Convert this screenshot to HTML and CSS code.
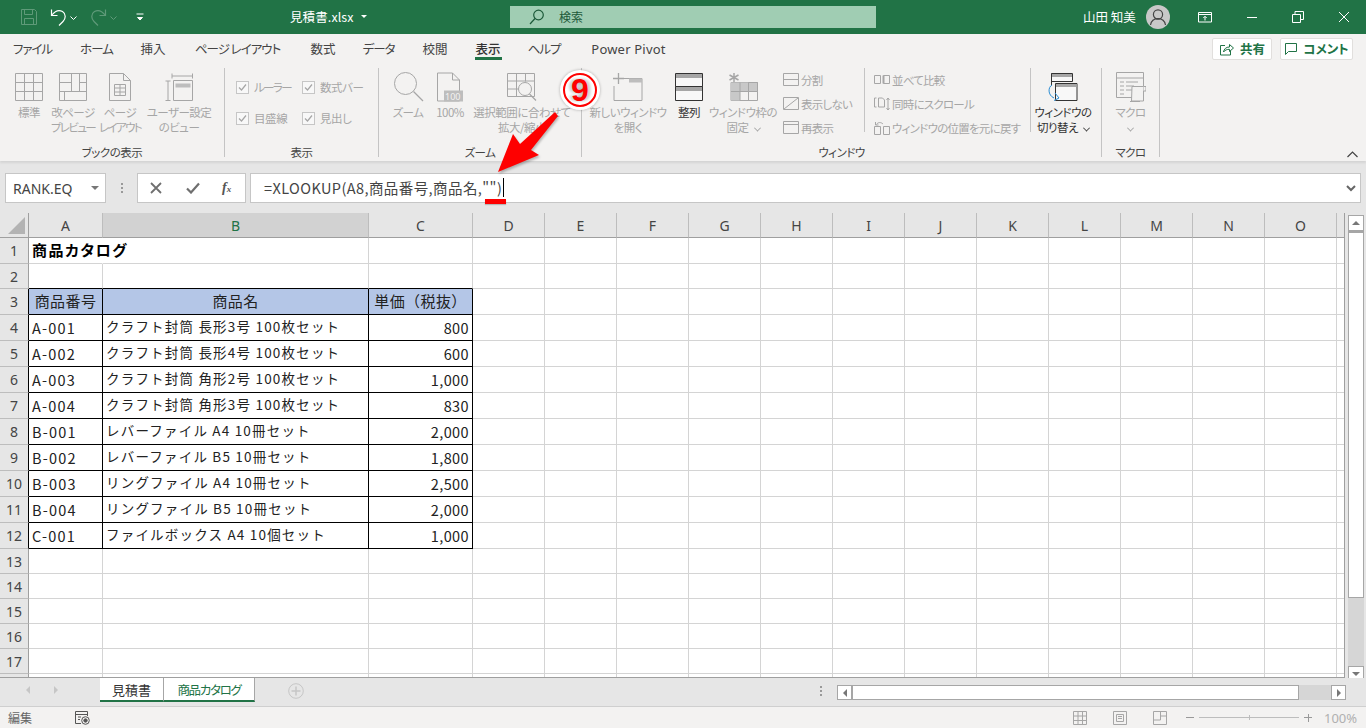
FILE: index.html
```html
<!DOCTYPE html>
<html lang="ja">
<head>
<meta charset="utf-8">
<title>見積書.xlsx - Excel</title>
<link rel="stylesheet" href="styles.css">
</head>
<body>
<div class="app">
  <header class="titlebar">
    <div class="qat">
      <svg class="qi s-save" width="18" height="18" viewBox="0 0 18 18" fill="none" stroke="#5f9a79"><path d="M1.5 1.5h13l2 2v13h-15z"/><path d="M4.5 1.5v5h8v-5M4.5 16.5v-6h9v6"/></svg>
      <svg class="qi s-undo" width="18" height="18" viewBox="0 0 18 18" fill="none" stroke="#fff" stroke-width="1.2"><path d="M1.5 1.5v6h6"/><path d="M1.8 7C5 3 9 1.5 12.5 3.5c3.5 2.2 3.5 7 .5 10l-4 4"/></svg>
      <svg class="qi s-car" width="7" height="4" viewBox="0 0 7 4" fill="none" stroke="#fff"><path d="M.5.5l3 3 3-3"/></svg>
      <svg class="qi s-redo" width="18" height="18" viewBox="0 0 18 18" fill="none" stroke="#5f9a79" stroke-width="1.2"><path d="M16.5 1.5v6h-6"/><path d="M16.2 7C13 3 9 1.5 5.5 3.5c-3.5 2.2-3.500 7-.5 10l4 4"/></svg>
      <svg class="qi s-car2" width="7" height="4" viewBox="0 0 7 4" fill="none" stroke="#5f9a79"><path d="M.5.5l3 3 3-3"/></svg>
      <svg class="qi s-cust" width="8" height="8" viewBox="0 0 8 8" fill="none" stroke="#fff"><path d="M.5 1h7"/><path d="M1.500 4.500h5L4 7z" fill="#fff"/></svg>
    </div>
    <div class="docname">見積書.xlsx<span class="docarrow"></span></div>
    <div class="search">
      <svg width="16" height="16" viewBox="0 0 16 16" fill="none" stroke="#1d5a3a" stroke-width="1.2"><circle cx="9.5" cy="6" r="4.8"/><path d="M6 9.5L1 15"/></svg>
      <span>検索</span>
    </div>
    <div class="user">山田 知美</div>
    <div class="avatar"><svg width="24" height="24" viewBox="0 0 24 24" fill="none" stroke="#444" stroke-width="1.2"><circle cx="12" cy="9.5" r="4.6"/><path d="M4.5 20c.8-4.5 3.8-6.3 7.5-6.3s6.700 1.800 7.500 6.300"/></svg></div>
    <div class="winbtns">
      <svg width="14" height="12" viewBox="0 0 14 12" fill="none" stroke="#fff"><path d="M.5 1.500h13v9.500H.5zM.5 3.500h13"/><path d="M7 9.500V5.500M5.300 7L7 5.300 8.700 7"/></svg>
      <svg width="12" height="12" viewBox="0 0 12 12" fill="none" stroke="#fff"><path d="M1 6.500h10"/></svg>
      <svg width="12" height="12" viewBox="0 0 12 12" fill="none" stroke="#fff"><path d="M.5 3.500h8v8h-8zM3 3.500v-3h8.500v8h-3"/></svg>
      <svg width="12" height="12" viewBox="0 0 12 12" fill="none" stroke="#fff"><path d="M1 1l10 10M11 1L1 11"/></svg>
    </div>
  </header>

  <nav class="tabs">
    <span class="tab kana">ファイル</span><span class="tab kana">ホーム</span><span class="tab">挿入</span><span class="tab kana">ページ レイアウト</span><span class="tab">数式</span><span class="tab kana">データ</span><span class="tab">校閲</span><span class="tab on"><b>表示</b></span><span class="tab kana">ヘルプ</span><span class="tab">Power Pivot</span>
    <div class="tabactions">
      <button class="act share"><svg width="16" height="14" viewBox="0 0 16 14" fill="none" stroke="#217346"><path d="M6 3.500H1.500v9.500h10V9"/><path d="M4.500 10c.5-3 2.500-5 6-5V2.500l4 3.500-4 3.500V7.300C8 7.300 6 8 4.500 10z"/></svg><b>共有</b></button>
      <button class="act comment"><svg width="14" height="14" viewBox="0 0 14 14" fill="none" stroke="#217346"><path d="M1.500 1.500h11v8h-8l-3 3z"/></svg><b>コメント</b></button>
    </div>
  </nav>

  <section class="ribbon">
    <div class="group g1">
      <div class="grow">
        <div class="rbtn dis w44">
          <svg class="ic" width="28" height="28" viewBox="0 0 28 28" fill="#f3f2f1" stroke="#a6a6a6"><path d="M.5.500h27v27H.5zM9.500.5v27M18.500.5v27M.5 9.500h27M.5 18.500h27"/></svg>
          <span>標準</span>
        </div>
        <div class="rbtn dis w44">
          <svg class="ic" width="28" height="28" viewBox="0 0 28 28" fill="#f3f2f1" stroke="#a6a6a6"><path d="M.5.500h27v27H.5zM.5 18.500h27M.5 9.500h12M12.500.5v18M5.500 18.500v9M20.500.5v18M20.500 9.500h7"/></svg>
          <span>改ページ<br><em class="kn">プレビュー</em></span>
        </div>
        <div class="rbtn dis w50">
          <svg class="ic" width="22" height="28" viewBox="0 0 22 28" fill="#f3f2f1" stroke="#a6a6a6"><path d="M.5.500h14l7 7v20H.5zM14.500.5v7h7"/><path d="M5.500 11.500h11v11h-11zM5.500 15h11M5.500 19h11M11 11.500v11"/></svg>
          <span>ページ<br><em class="kn">レイアウト</em></span>
        </div>
        <div class="rbtn dis w68">
          <svg class="ic" width="28" height="28" viewBox="0 0 28 28" fill="#f3f2f1" stroke="#a6a6a6"><path d="M7 .5v5M27.500.5v5M7 3h20.500M.5 8h5M.5 27.500h5M3 8v19.500"/><path d="M8.500 7.500h19v20h-19z"/><path d="M10.500 10.500h15v4h-15z" fill="#bdbdbd" stroke="none"/></svg>
          <span>ユーザー設定<br>のビュー</span>
        </div>
      </div>
      <div class="glabel">ブックの表示</div>
    </div>

    <div class="group g2">
      <div class="checks">
        <label class="chk"><i class="box"><svg width="9" height="9" viewBox="0 0 9 9" fill="none" stroke="#a6a6a6" stroke-width="1.200"><path d="M1 4.500l2.500 2.500L8 1.500"/></svg></i><em class="kn">ルーラー</em></label>
        <label class="chk"><i class="box"><svg width="9" height="9" viewBox="0 0 9 9" fill="none" stroke="#a6a6a6" stroke-width="1.200"><path d="M1 4.500l2.500 2.500L8 1.500"/></svg></i>数式バー</label>
        <label class="chk"><i class="box"><svg width="9" height="9" viewBox="0 0 9 9" fill="none" stroke="#a6a6a6" stroke-width="1.200"><path d="M1 4.500l2.500 2.500L8 1.500"/></svg></i>目盛線</label>
        <label class="chk"><i class="box"><svg width="9" height="9" viewBox="0 0 9 9" fill="none" stroke="#a6a6a6" stroke-width="1.200"><path d="M1 4.500l2.500 2.500L8 1.500"/></svg></i>見出し</label>
      </div>
      <div class="glabel">表示</div>
    </div>

    <div class="group g3">
      <div class="grow">
        <div class="rbtn dis w44">
          <svg class="ic" width="31" height="30" viewBox="0 0 31 30" fill="none" stroke="#a6a6a6"><circle cx="12.500" cy="11.500" r="11"/><path d="M20.500 19.500l9.500 9.500" stroke-width="1.300"/></svg>
          <span>ズーム</span>
        </div>
        <div class="rbtn dis w40">
          <svg class="ic" width="26" height="29" viewBox="0 0 26 29" fill="#f3f2f1" stroke="#a6a6a6"><path d="M.5.500h15l7 7v21H.5zM15.500.5v7h7"/><rect x="7" y="18" width="19" height="11" fill="#bdbdbd" stroke="none"/><text x="8" y="27" class="hundred">100</text></svg>
          <span>100%</span>
        </div>
        <div class="rbtn dis w104">
          <svg class="ic ic3" width="30" height="28" viewBox="0 0 30 28" fill="none" stroke="#a6a6a6"><path d="M.5.500h27v23H.5zM.5 8h27M.5 16h12M9.500.5v23M18.500.5v8"/><circle cx="18" cy="16" r="6.500" fill="#f3f2f1"/><path d="M22.500 21l6.500 6.500" stroke-width="1.300"/></svg>
          <span>選択範囲に合わせて<br>拡大/縮小</span>
        </div>
      </div>
      <div class="glabel">ズーム</div>
    </div>

    <div class="group g4">
      <div class="grow">
        <div class="rbtn dis w80">
          <svg class="ic" width="30" height="28" viewBox="0 0 30 28" fill="none" stroke="#a6a6a6"><path d="M1 27.500h28v-22H10M1 27.500V13"/><path d="M16 5.500h13v4H16z" fill="#bdbdbd" stroke="none"/><path d="M5.500 0v11M0 5.500h11" stroke-width="1.300"/></svg>
          <span>新しいウィンドウ<br>を開く</span>
        </div>
        <div class="rbtn w42">
          <svg class="ic" width="28" height="28" viewBox="0 0 28 28" fill="#f8f8f8" stroke="#333"><path d="M.5.500h27v13H.5zM.5 13.500h27v14H.5z"/><path d="M1 1h26v4H1zM1 14h26v4H1z" fill="#a6a6a6" stroke="none"/></svg>
          <span>整列</span>
        </div>
        <div class="rbtn dis w66">
          <svg class="ic" width="30" height="28" viewBox="0 0 30 28" fill="#f3f2f1" stroke="#a6a6a6"><path d="M3 9.500h26.500v18H3z"/><path d="M3 9.500h17v9H12v9H3z" fill="#c8c8c8" stroke="none"/><path d="M20.500 9.500v18M12 9.500v18M3 18.500h26.500"/><path d="M20.500 9.500h9v9h-9z" fill="#c8c8c8"/><path d="M6 0v9M1.500 2L10.500 7M10.500 2L1.500 7" stroke-width="1.500"/></svg>
          <span>ウィンドウ枠の<br>固定<em class="chev"></em></span>
        </div>
        <div class="stack st1">
          <div class="sm dis"><svg width="16" height="13" viewBox="0 0 16 13" fill="none" stroke="#a6a6a6"><path d="M.5.500h15v12H.5zM.5 6.500h15"/></svg>分割</div>
          <div class="sm dis"><svg width="16" height="13" viewBox="0 0 16 13" fill="none" stroke="#a6a6a6"><path d="M.5.500h15v12H.5zM1 12L15 1"/></svg>表示しない</div>
          <div class="sm dis"><svg width="16" height="13" viewBox="0 0 16 13" fill="none" stroke="#a6a6a6"><path d="M.5.500h15v12H.5zM.5 3.500h15"/></svg>再表示</div>
        </div>
        <div class="stack st2">
          <div class="sm dis"><svg width="16" height="10" viewBox="0 0 16 10" fill="none" stroke="#a6a6a6"><path d="M.5.500h6v8h-6zM9.500.5h6v8h-6z"/><path d="M9.500.5v8" stroke-width="2"/></svg>並べて比較</div>
          <div class="sm dis"><svg width="16" height="14" viewBox="0 0 16 14" fill="none" stroke="#a6a6a6"><path d="M2.500 1H.5v9h2M4.500 1h4l2 2v7h-6zM14 1v12M12.500 3L14 1l1.500 2M12.500 11l1.500 2 1.500-2"/></svg>同時にスクロール</div>
          <div class="sm dis"><svg width="16" height="14" viewBox="0 0 16 14" fill="none" stroke="#a6a6a6"><path d="M.5 5.500h6v8h-6zM9.500 5.500h6v8h-6z"/><path d="M2.500 3.500C4 1 7 1 9 3M1.500 1v3h3"/></svg>ウィンドウの位置を元に戻す</div>
        </div>
        <div class="rbtn w68 sw">
          <svg class="ic" width="30" height="28" viewBox="0 0 30 28" fill="#f8f8f8" stroke="#333"><path d="M3.500.5h21v8H3.500z"/><path d="M4 1h20v3H4z" fill="#a6a6a6" stroke="none"/><path d="M3.500 .5v12M7.500 10.500h21.500v17H7.500z"/><path d="M8 11h20.500v3H8z" fill="#a6a6a6" stroke="none"/><path d="M4 12c-4 2-4.500 10 2 13M7 20l4 5-5 2.500" fill="none" stroke="#2a8dd4"/></svg>
          <span>ウィンドウの<br>切り替え<em class="chev dark"></em></span>
        </div>
      </div>
      <div class="glabel lab4">ウィンドウ</div>
    </div>

    <div class="group g5">
      <div class="grow">
        <div class="rbtn dis w57">
          <svg class="ic" width="30" height="30" viewBox="0 0 30 30" fill="#f3f2f1" stroke="#a6a6a6"><path d="M.5.500h27v25H.5zM.5 6h27" /><path d="M4 10h4M10 10h12M4 14h4M10 14h8M4 18h4M10 18h6M4 22h4"/><path d="M16 14.500h11.500V29h-12z" fill="#f3f2f1"/><path d="M27.500 14.500h2.500V19h-2.500M14 29.500h10"/></svg>
          <span>マクロ<br><em class="chev solo"></em></span>
        </div>
      </div>
      <div class="glabel">マクロ</div>
    </div>
    <svg class="collapse" width="11" height="7" viewBox="0 0 11 7" fill="none" stroke="#444" stroke-width="1.200"><path d="M.5 6l5-5 5 5"/></svg>
  </section>

  <section class="fbar">
    <div class="namebox">RANK.EQ<i class="tri"></i></div>
    <div class="fdots"></div>
    <div class="fbtns">
      <svg width="12" height="12" viewBox="0 0 12 12" fill="none" stroke="#6f6f6f" stroke-width="1.800"><path d="M1 1l10 10M11 1L1 11"/></svg>
      <svg width="14" height="12" viewBox="0 0 14 12" fill="none" stroke="#6f6f6f" stroke-width="2.200"><path d="M1 6.500l4 4L13 1.500"/></svg>
      <span class="fx"><i>f</i><small>x</small></span>
    </div>
    <div class="finput"><span class="ftext">=XLOOKUP(A8,商品番号,商品名,"")</span><i class="caret"></i>
      <svg class="fexpand" width="10" height="7" viewBox="0 0 10 7" fill="none" stroke="#666" stroke-width="2"><path d="M1 1l4 4 4-4"/></svg>
    </div>
  </section>

  <section class="sheetwrap">
    <div class="sheet">
      <div class="row h25 head"><div class="rh corner"><svg width="17" height="17" viewBox="0 0 17 17"><path d="M17 0v17H0z" fill="#b3b3b3"/></svg></div><div class="ch a">A</div><div class="ch b sel">B</div><div class="ch c">C</div><div class="ch n">D</div><div class="ch n">E</div><div class="ch n">F</div><div class="ch n">G</div><div class="ch n">H</div><div class="ch n">I</div><div class="ch n">J</div><div class="ch n">K</div><div class="ch n">L</div><div class="ch n">M</div><div class="ch n">N</div><div class="ch n">O</div><div class="ch p"></div></div>
      <div class="row h26"><div class="rh">1</div><div class="ce a over"><b>商品カタログ</b></div><div class="ce b"></div><div class="ce c"></div><div class="rest"></div></div>
      <div class="row h25 tb"><div class="rh">2</div><div class="ce a"></div><div class="ce b"></div><div class="ce c"></div><div class="rest"></div></div>
      <div class="row h26 tbl hdr"><div class="rh">3</div><div class="ce a mid">商品番号</div><div class="ce b mid">商品名</div><div class="ce c mid">単価（税抜）</div><div class="rest"></div></div>
      <div class="row h26 tbl"><div class="rh">4</div><div class="ce a code">A-001</div><div class="ce b nm">クラフト封筒 長形3号 100枚セット</div><div class="ce c num">800</div><div class="rest"></div></div>
      <div class="row h26 tbl"><div class="rh">5</div><div class="ce a code">A-002</div><div class="ce b nm">クラフト封筒 長形4号 100枚セット</div><div class="ce c num">600</div><div class="rest"></div></div>
      <div class="row h26 tbl"><div class="rh">6</div><div class="ce a code">A-003</div><div class="ce b nm">クラフト封筒 角形2号 100枚セット</div><div class="ce c num">1,000</div><div class="rest"></div></div>
      <div class="row h26 tbl"><div class="rh">7</div><div class="ce a code">A-004</div><div class="ce b nm">クラフト封筒 角形3号 100枚セット</div><div class="ce c num">830</div><div class="rest"></div></div>
      <div class="row h26 tbl"><div class="rh">8</div><div class="ce a code">B-001</div><div class="ce b nm">レバーファイル A4 10冊セット</div><div class="ce c num">2,000</div><div class="rest"></div></div>
      <div class="row h26 tbl"><div class="rh">9</div><div class="ce a code">B-002</div><div class="ce b nm">レバーファイル B5 10冊セット</div><div class="ce c num">1,800</div><div class="rest"></div></div>
      <div class="row h26 tbl"><div class="rh">10</div><div class="ce a code">B-003</div><div class="ce b nm">リングファイル A4 10冊セット</div><div class="ce c num">2,500</div><div class="rest"></div></div>
      <div class="row h26 tbl"><div class="rh">11</div><div class="ce a code">B-004</div><div class="ce b nm">リングファイル B5 10冊セット</div><div class="ce c num">2,000</div><div class="rest"></div></div>
      <div class="row h26 tbl"><div class="rh">12</div><div class="ce a code">C-001</div><div class="ce b nm">ファイルボックス A4 10個セット</div><div class="ce c num">1,000</div><div class="rest"></div></div>
      <div class="row h25"><div class="rh">13</div><div class="ce a"></div><div class="ce b"></div><div class="ce c"></div><div class="rest"></div></div>
      <div class="row h25"><div class="rh">14</div><div class="ce a"></div><div class="ce b"></div><div class="ce c"></div><div class="rest"></div></div>
      <div class="row h25"><div class="rh">15</div><div class="ce a"></div><div class="ce b"></div><div class="ce c"></div><div class="rest"></div></div>
      <div class="row h25"><div class="rh">16</div><div class="ce a"></div><div class="ce b"></div><div class="ce c"></div><div class="rest"></div></div>
      <div class="row h25"><div class="rh">17</div><div class="ce a"></div><div class="ce b"></div><div class="ce c"></div><div class="rest"></div></div>
      <div class="row h5"><div class="rh"></div><div class="ce a"></div><div class="ce b"></div><div class="ce c"></div><div class="rest"></div></div>
    </div>
    <div class="vscroll">
      <div class="sbtn"><i class="up"></i></div>
      <div class="vthumb"></div>
      <div class="vtrack"></div>
      <div class="sbtn"><i class="down"></i></div>
    </div>
  </section>

  <section class="tabbar">
    <div class="sheetnav">
      <i class="nl"></i><i class="nr"></i>
    </div>
    <div class="stab">見積書</div>
    <div class="stab active">商品カタログ</div>
    <div class="addsheet"><svg width="16" height="16" viewBox="0 0 16 16" fill="none" stroke="#c6c6c6"><circle cx="8" cy="8" r="7.300"/><path d="M8 3.500v9M3.500 8h9" stroke-width="1.500"/></svg></div>
    <div class="hdots"></div>
    <div class="hscroll">
      <div class="sbtn h"><i class="left"></i></div>
      <div class="hthumb"></div>
      <div class="htrack"></div>
      <div class="sbtn h"><i class="right"></i></div>
    </div>
  </section>

  <footer class="status">
    <span class="mode">編集</span>
    <svg class="macro" width="15" height="14" viewBox="0 0 15 14" fill="none" stroke="#555"><path d="M6 12.500H.5v-12h12V5M.5 3.500h12M3 6h3M3 8.500h2"/><circle cx="10.500" cy="9.500" r="3.800"/><circle cx="10.500" cy="9.500" r="1.700" fill="#555"/></svg>
    <div class="views">
      <svg width="14" height="14" viewBox="0 0 14 14" fill="none" stroke="#a6a6a6"><path d="M.5.500h13v13H.5zM5 .5v13M9.500.5v13M.5 5h13M.5 9.500h13"/></svg>
      <svg width="14" height="14" viewBox="0 0 14 14" fill="none" stroke="#a6a6a6"><path d="M.5.500h13v13H.5zM3.500 3.500h7v7h-7zM5 5.500h4M5 7.500h4"/></svg>
      <svg width="14" height="14" viewBox="0 0 14 14" fill="none" stroke="#a6a6a6"><path d="M.5.500h13v13H.5zM.5 9h7V.5M7.500 5H13"/></svg>
    </div>
    <div class="zoomer">
      <i class="zm"></i>
      <div class="slider"><i class="knob"></i></div>
      <i class="zp"></i>
    </div>
    <span class="pct">100%</span>
  </footer>

  <svg class="arrow" width="90" height="80" viewBox="0 0 90 80"><path d="M8 71L23 33 30 43 65 11 68 15 41 49 49 54z" fill="#fe0000"/></svg>
  <div class="badge"><span>9</span></div>
  <div class="underline"></div>
</div>
</body>
</html>
```

FILE: styles.css
```css
* { box-sizing: border-box; }
html, body { margin: 0; padding: 0; }
body { font-family: "Noto Sans CJK JP", "Noto Sans", sans-serif; font-feature-settings: "palt"; color: #444; }
.app { position: relative; width: 1366px; height: 728px; overflow: hidden; display: flex; flex-direction: column; background: #f3f2f1; }
svg { display: block; }
i, em { font-style: normal; }

/* title bar */
.titlebar { height: 34px; background: #217346; display: flex; align-items: center; color: #fff; font-size: 12.500px; flex: none; }
.qat { width: 290px; display: flex; align-items: center; flex: none; }
.s-save { margin-left: 20px; }
.s-undo { margin-left: 12px; }
.s-car { margin-left: 2px; margin-top: 2px; }
.s-redo { margin-left: 12px; }
.s-car2 { margin-left: 3px; margin-top: 2px; }
.s-cust { margin-left: 19px; }
.docname { width: 220px; flex: none; display: flex; align-items: center; letter-spacing: .1px; margin-top: -2px; }
.docarrow { width: 0; height: 0; border: 3px solid transparent; border-top: 3.500px solid #fff; border-bottom: 0; margin-left: 7px; }
.search { width: 366px; height: 22px; flex: none; background: #a0cdb3; display: flex; align-items: center; padding-left: 19px; color: #1d5a3a; font-size: 12px; }
.search span { margin-left: 14px; margin-top: -2px; }
.user { margin-left: 207px; width: 52px; flex: none; white-space: nowrap; font-size: 12.500px; margin-top: -2px; }
.avatar { margin-left: 11px; width: 24px; height: 24px; border-radius: 50%; background: #c8c8c8; flex: none; }
.winbtns { display: flex; align-items: center; margin-left: 28px; gap: 34px; }

/* tabs */
.tabs { height: 30px; display: flex; align-items: center; font-size: 12.500px; position: relative; flex: none; padding-bottom: 1px; }
.tab { text-align: center; height: 100%; display: flex; align-items: center; justify-content: center; white-space: nowrap; color: #444; }
.tab.kana { letter-spacing: -1px; }
.tab:nth-child(1) { width: 65px; }
.tab:nth-child(2) { width: 63px; }
.tab:nth-child(3) { width: 50px; }
.tab:nth-child(4) { width: 119px; }
.tab:nth-child(5) { width: 52px; }
.tab:nth-child(6) { width: 59px; }
.tab:nth-child(7) { width: 54px; }
.tab:nth-child(8) { width: 52px; }
.tab:nth-child(9) { width: 60px; }
.tab:nth-child(10) { width: 109px; font-family: "Noto Sans", sans-serif; font-size: 13px; letter-spacing: .2px; }
.tab.on { position: relative; }
.tab.on b { font-weight: 500; color: #333; }
.tab.on::after { content: ""; position: absolute; left: 13px; right: 12px; bottom: 3px; height: 3px; background: #217346; }
.tabactions { margin-left: auto; display: flex; gap: 8px; padding-right: 13px; }
.act { height: 22px; border: 1px solid #e1dfdd; background: #fff; border-radius: 2px; display: flex; align-items: center; justify-content: center; gap: 5px; color: #217346; font: inherit; font-size: 12.500px; padding: 0; }
.act b { font-weight: 700; }
.share { width: 60px; }
.comment { width: 73px; }

/* ribbon */
.ribbon { height: 97px; display: flex; padding-top: 4px; position: relative; flex: none; box-shadow: 0 2px 2px rgba(0,0,0,.08); z-index: 2; font-size: 11.500px; }
.group { height: 89px; display: flex; flex-direction: column; border-right: 1px solid #c4c4c4; flex: none; }
.g1 { width: 225px; padding-left: 7px; }
.g2 { width: 154px; }
.g3 { width: 203px; padding-left: 7px; }
.g4 { width: 520px; padding-left: 6px; }
.g5 { width: 58px; }
.grow { display: flex; flex: 1; min-height: 0; }
.glabel { height: 15px; line-height: 15px; margin-bottom: -3px; text-align: center; color: #444; font-size: 11.500px; letter-spacing: -.5px; white-space: nowrap; }
.g1 .glabel, .g3 .glabel { margin-left: -7px; }
.lab4 { margin-left: -6px; margin-right: 0; }
.rbtn { display: flex; flex-direction: column; align-items: center; padding-top: 4px; flex: none; color: #333; letter-spacing: -.5px; }
.rbtn span { display: block; margin-top: 3px; line-height: 14.500px; text-align: center; white-space: nowrap; }
.rbtn .ic { height: 30px; }
.rbtn.dis { color: #a6a6a6; }
.rbtn.sw { margin-left: -2px; }
.kn { letter-spacing: -1.600px; }
.hundred { font-family: "Noto Sans", sans-serif; font-size: 9px; fill: #f3f2f1; stroke: none; letter-spacing: 0; }
.w40 { width: 40px; } .w42 { width: 42px; } .w44 { width: 44px; } .w50 { width: 50px; } .w57 { width: 57px; } .w66 { width: 66px; } .w68 { width: 68px; } .w80 { width: 80px; } .w104 { width: 104px; }
.chev { display: inline-block; width: 5px; height: 5px; border-right: 1px solid #a6a6a6; border-bottom: 1px solid #a6a6a6; transform: rotate(45deg) translate(-1px,-1px); margin-left: 6px; }
.chev.dark { border-color: #444; }
.chev.solo { margin-left: 0; }
.checks { display: grid; grid-template-columns: 66px 66px; grid-template-rows: 31px 31px; padding: 11px 0 0 11px; flex: 1; align-content: start; }
.chk { display: flex; align-items: center; color: #a6a6a6; white-space: nowrap; height: 16px; letter-spacing: -.4px; }
.box { width: 13px; height: 13px; border: 1px solid #c6c6c6; background: #f8f8f8; margin-right: 5px; display: flex; align-items: center; justify-content: center; flex: none; }
.stack { display: flex; flex-direction: column; flex: none; }
.st1 { margin-left: 7px; width: 82px; border-right: 1px solid #c4c4c4; height: 64px; gap: 9px; padding-top: 4px; }
.st2 { padding-left: 9px; width: 166px; border-right: 1px solid #c4c4c4; height: 64px; gap: 9px; padding-top: 4px; }
.sm { display: flex; align-items: center; gap: 2px; height: 15px; color: #a6a6a6; white-space: nowrap; letter-spacing: -.75px; }
.collapse { position: absolute; right: 8px; bottom: 3px; }

/* formula bar */
.fbar { height: 52px; background: #e6e6e6; display: flex; padding: 12px 5px 10px 5px; flex: none; }
.namebox { width: 101px; background: #fff; border: 1px solid #c6c6c6; display: flex; align-items: center; padding-left: 7px; font-family: "Noto Sans", sans-serif; font-size: 14px; color: #444; position: relative; }
.tri { position: absolute; right: 6px; top: 12px; border: 4px solid transparent; border-top: 4px solid #777; border-bottom: 0; }
.fdots { width: 2px; height: 10px; margin: 10px 14px 0 15px; background: repeating-linear-gradient(#999 0 2px, transparent 2px 4px); flex: none; }
.fbtns { width: 109px; background: #fff; border: 1px solid #c6c6c6; display: flex; align-items: center; padding-left: 12px; gap: 24px; flex: none; }
.fx { font-family: "Liberation Serif", serif; color: #555; font-size: 14px; font-weight: 700; margin-left: -2px; }
.fx i { font-style: italic; }
.fx small { font-size: 9px; font-style: italic; }
.finput { flex: 1; margin-left: 4px; background: #fff; border: 1px solid #c6c6c6; display: flex; align-items: center; padding-left: 13px; padding-bottom: 2px; color: #444; position: relative; }
.ftext { font-size: 14.500px; font-feature-settings: normal; white-space: nowrap; letter-spacing: .42px; }
.caret { width: 1px; height: 19px; background: #000; margin-left: 1px; }
.fexpand { position: absolute; right: 4px; top: 11px; }

/* sheet */
.sheetwrap { height: 465px; background: #e6e6e6; display: flex; flex: none; }
.sheet { width: 1345px; height: 465px; background: #fff; border-right: 1px solid #9f9f9f; border-bottom: 1px solid #9f9f9f; overflow: hidden; flex: none; }
.row { display: flex; }
.h25 { height: 25px; } .h26 { height: 26px; } .h5 { height: 5px; }
.rh { width: 29px; flex: none; background: #e6e6e6; border-right: 1px solid #9f9f9f; border-bottom: 1px solid #bdbdbd; display: flex; align-items: center; justify-content: center; font-family: "Noto Sans", sans-serif; font-size: 14px; color: #444; }
.corner { align-items: flex-end; justify-content: flex-end; padding: 0 3px 3px 0; border-bottom: 1px solid #9f9f9f; }
.ch { flex: none; height: 25px; background: #e6e6e6; border-right: 1px solid #bdbdbd; border-bottom: 1px solid #9f9f9f; display: flex; align-items: center; justify-content: center; font-family: "Noto Sans", sans-serif; font-size: 14px; color: #444; }
.ch.sel { background: #d2d2d2; color: #217346; }
.a { width: 74px; flex: none; } .b { width: 266px; flex: none; } .c { width: 104px; flex: none; }
.ch.n { width: 72px; }
.ch.p { flex: 1; border-right: 0; }
.ce { border-right: 1px solid #d4d4d4; border-bottom: 1px solid #d4d4d4; display: flex; align-items: center; padding: 0 3px; font-size: 14.500px; color: #222; white-space: nowrap; }
.rest { flex: 1; border-bottom: 1px solid #d4d4d4; background: repeating-linear-gradient(90deg, transparent 0 71px, #d4d4d4 71px 72px); }
.over { overflow: visible; border-right-color: transparent; padding-bottom: 3px; }
.over b { color: #000; font-size: 15px; font-weight: 700; letter-spacing: 1.500px; }
.tb .ce { border-bottom-color: #000; }
.tbl .ce { border-right-color: #000; border-bottom-color: #000; }
.tbl .rh { border-right-color: #000; }
.hdr .ce { background: #b4c6e7; }
.ce.mid { justify-content: center; font-feature-settings: normal; font-size: 15px; letter-spacing: .4px; padding: 0 0 3px; }
.code { letter-spacing: 1.200px; }
.ce.nm { font-size: 13.500px; font-feature-settings: normal; letter-spacing: 1.200px; padding-bottom: 3px; }
.num { justify-content: flex-end; letter-spacing: .4px; }
.vscroll { width: 21px; padding-left: 3px; padding-right: 2px; display: flex; flex-direction: column; flex: none; margin-top: 2px; height: 467px; }
.sbtn { width: 16px; height: 16px; background: #fff; border: 1px solid #a6a6a6; display: flex; align-items: center; justify-content: center; flex: none; }
.vthumb { height: 367px; background: #fff; border: 1px solid #a6a6a6; border-top-width: 2px; flex: none; }
.vtrack { flex: 1; background: #d6d6d6; }
.up { border: 4px solid transparent; border-bottom: 4px solid #777; border-top: 0; }
.down { border: 4px solid transparent; border-top: 4px solid #777; border-bottom: 0; }
.left { border: 4px solid transparent; border-right: 4px solid #777; border-left: 0; }
.right { border: 4px solid transparent; border-left: 4px solid #777; border-right: 0; }

/* tab bar */
.tabbar { height: 28px; background: #e6e6e6; display: flex; align-items: flex-start; flex: none; }
.sheetnav { width: 100px; height: 24px; flex: none; display: flex; align-items: center; padding-left: 26px; gap: 24px; }
.nl { border: 4px solid transparent; border-right: 4px solid #c6c6c6; border-left: 0; }
.nr { border: 4px solid transparent; border-left: 4px solid #c6c6c6; border-right: 0; }
.stab { height: 24px; background: #fff; border-bottom: 2px solid #217346; border-right: 1px solid #a6a6a6; display: flex; align-items: center; justify-content: center; font-size: 13px; color: #333; flex: none; width: 64px; }
.stab.active { width: 91px; color: #217346; font-size: 12.500px; letter-spacing: -1.300px; }
.addsheet { margin: 5px 0 0 33px; flex: none; }
.hdots { width: 2px; height: 10px; margin: 8px 0 0 516px; background: repeating-linear-gradient(#999 0 2px, transparent 2px 4px); flex: none; }
.hscroll { display: flex; margin: 7px 0 0 15px; width: 509px; flex: none; height: 15px; }
.sbtn.h { width: 15px; height: 15px; }
.hthumb { flex: none; width: 447px; background: #fff; border: 1px solid #a6a6a6; }
.htrack { flex: 1; background: #d6d6d6; }

/* status bar */
.status { flex: 1; background: #f3f2f1; border-top: 1px solid #cfcfcf; display: flex; align-items: center; font-size: 12px; color: #666; }
.mode { margin-left: 8px; width: 67px; flex: none; }
.views { display: flex; gap: 26px; margin-left: 983px; flex: none; }
.zoomer { display: flex; align-items: center; margin-left: 19px; width: 126px; flex: none; }
.zm, .zp { width: 8px; height: 1px; background: #999; position: relative; flex: none; }
.zp::after { content: ""; position: absolute; left: 3.500px; top: -3.500px; width: 1px; height: 8px; background: #999; }
.slider { width: 100px; height: 1px; background: #bdbdbd; margin: 0 5px; position: relative; flex: none; }
.knob { position: absolute; left: 50px; top: -2px; width: 1px; height: 5px; background: #bdbdbd; }
.pct { margin-left: 12px; color: #b0b0b0; font-family: "Noto Sans", sans-serif; font-size: 13px; }

/* annotation */
.arrow { position: absolute; left: 490px; top: 101px; filter: drop-shadow(1px 2px 1px rgba(0,0,0,.25)); z-index: 5; }
.badge { position: absolute; left: 560px; top: 70px; width: 40px; height: 40px; border-radius: 50%; background: #fff; box-shadow: 0 0 3px rgba(0,0,0,.3); display: flex; align-items: center; justify-content: center; z-index: 6; }
.badge::before { content: ""; position: absolute; inset: 3px; border-radius: 50%; border: 2px solid #fe0000; }
.badge span { font-family: "Liberation Sans", sans-serif; font-weight: 700; font-size: 32px; color: #fe0000; line-height: 1; text-shadow: 3px 0 3px rgba(0,0,0,.2), -3px 0 3px rgba(0,0,0,.2); }
.underline { position: absolute; left: 485px; top: 199px; width: 21px; height: 5px; background: #fe0000; box-shadow: 0 1px 1px rgba(0,0,0,.2); z-index: 5; }
```
